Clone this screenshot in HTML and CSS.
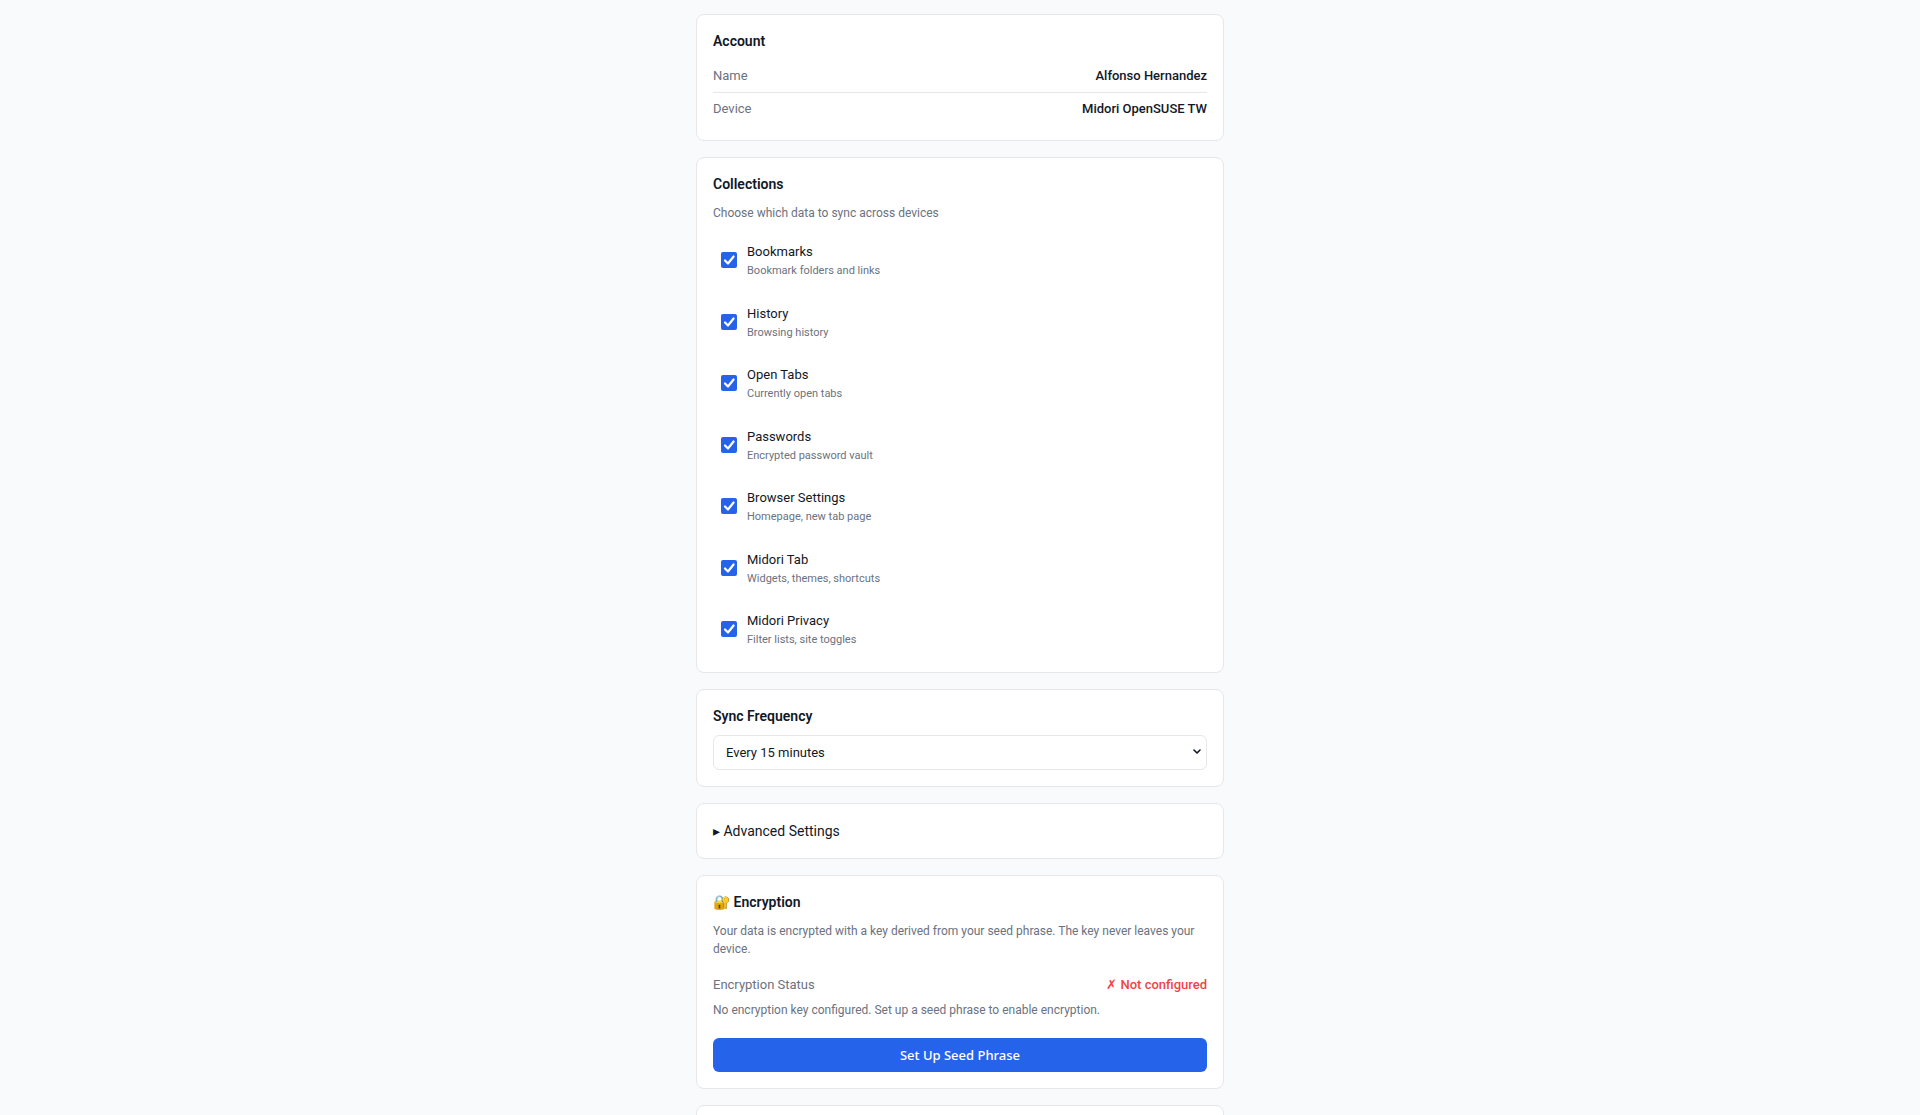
FILE: index.html
```html
<!DOCTYPE html>
<html lang="en">
<head>
    <meta charset="UTF-8">
    <meta name="viewport" content="width=device-width, initial-scale=1.0">
    <title>Midori Sync Settings</title>
    <link rel="stylesheet" href="styles.css">
</head>
<body>
    <main class="container">
        <section class="card">
            <h2>Account</h2>
            <div class="row">
                <span class="label">Name</span>
                <span class="value">Alfonso Hernandez</span>
            </div>
            <div class="row">
                <span class="label">Device</span>
                <span class="value">Midori OpenSUSE TW</span>
            </div>
        </section>

        <section class="card">
            <h2>Collections</h2>
            <p class="desc">Choose which data to sync across devices</p>
            <div class="collections">
                <label class="collection">
                    <input type="checkbox" checked>
                    <div>
                        <span class="collection-name">Bookmarks</span>
                        <div class="collection-desc">Bookmark folders and links</div>
                    </div>
                </label>
                <label class="collection">
                    <input type="checkbox" checked>
                    <div>
                        <span class="collection-name">History</span>
                        <div class="collection-desc">Browsing history</div>
                    </div>
                </label>
                <label class="collection">
                    <input type="checkbox" checked>
                    <div>
                        <span class="collection-name">Open Tabs</span>
                        <div class="collection-desc">Currently open tabs</div>
                    </div>
                </label>
                <label class="collection">
                    <input type="checkbox" checked>
                    <div>
                        <span class="collection-name">Passwords</span>
                        <div class="collection-desc">Encrypted password vault</div>
                    </div>
                </label>
                <label class="collection">
                    <input type="checkbox" checked>
                    <div>
                        <span class="collection-name">Browser Settings</span>
                        <div class="collection-desc">Homepage, new tab page</div>
                    </div>
                </label>
                <label class="collection">
                    <input type="checkbox" checked>
                    <div>
                        <span class="collection-name">Midori Tab</span>
                        <div class="collection-desc">Widgets, themes, shortcuts</div>
                    </div>
                </label>
                <label class="collection">
                    <input type="checkbox" checked>
                    <div>
                        <span class="collection-name">Midori Privacy</span>
                        <div class="collection-desc">Filter lists, site toggles</div>
                    </div>
                </label>
            </div>
        </section>

        <section class="card">
            <h2><label for="frequency">Sync Frequency</label></h2>
            <select id="frequency">
                <option>Every 5 minutes</option>
                <option selected>Every 15 minutes</option>
                <option>Every 30 minutes</option>
                <option>Every hour</option>
            </select>
        </section>

        <section class="card">
            <details>
                <summary>Advanced Settings</summary>
            </details>
        </section>

        <section class="card">
            <h2>🔐 Encryption</h2>
            <p class="desc">Your data is encrypted with a key derived from your seed phrase. The key never leaves your device.</p>
            <div class="row">
                <span class="label">Encryption Status</span>
                <span class="value error">✗ Not configured</span>
            </div>
            <p class="desc">No encryption key configured. Set up a seed phrase to enable encryption.</p>
            <div class="actions">
                <button type="button" class="btn-primary">Set Up Seed Phrase</button>
            </div>
        </section>

        <section class="card"></section>
    </main>
</body>
</html>
```
FILE: styles.css
```css
* { box-sizing: border-box; margin: 0; padding: 0; }
body { font-family: Roboto, sans-serif; font-size: 14px; line-height: 1.5; color: #111827; background: #f9fafb; height: 100vh; overflow: hidden; }
.container { max-width: 560px; margin: 0 auto; padding: 14px 16px; }

.card { background: white; border: 1px solid #e5e7eb; border-radius: 8px; padding: 16px; margin-bottom: 16px; }
.card h2 { font-size: 14px; font-weight: 600; margin-bottom: 8px; }
.desc { font-size: 12px; color: #6b7280; padding-top: 1px; margin-bottom: 11px; }

.row { display: flex; justify-content: space-between; align-items: center; padding: 6px 0; font-size: 13px; }
.row + .row { border-top: 1px solid #e5e7eb; }
.label { color: #6b7280; }
.value { font-weight: 500; }
.value.error { color: #ef4444; }

.collections { display: flex; flex-direction: column; gap: 8px; }
.collection { display: flex; align-items: center; gap: 10px; padding: 8px 8px 7px; cursor: pointer; }
.collection input { appearance: none; width: 16px; height: 16px; border: 1px solid #9ca3af; border-radius: 2px; }
.collection input:checked {
    border: none;
    background: #2563eb url("data:image/svg+xml,%3Csvg xmlns='http://www.w3.org/2000/svg' viewBox='0 0 16 16'%3E%3Cpath d='M4 8.5l3 3 5.6-7' fill='none' stroke='white' stroke-width='2.2' stroke-linecap='round' stroke-linejoin='round'/%3E%3C/svg%3E");
}
.collection-name { font-size: 13px; }
.collection-desc { font-size: 11px; color: #6b7280; padding-top: 1px; }

select {
    appearance: none;
    display: block;
    width: 100%;
    padding: 8px 12px;
    font-family: inherit;
    font-size: 13px;
    line-height: 17px;
    color: #111827;
    background: white url("data:image/svg+xml,%3Csvg xmlns='http://www.w3.org/2000/svg' width='8' height='6' viewBox='0 0 8 6'%3E%3Cpath d='M1 1l3 3 3-3' fill='none' stroke='%23111827' stroke-width='1.6' stroke-linecap='round' stroke-linejoin='round'/%3E%3C/svg%3E") no-repeat right 5px center;
    border: 1px solid #e5e7eb;
    border-radius: 6px;
}
summary { list-style: inside "▸ "; line-height: 22px; cursor: pointer; }

.actions { padding-top: 8px; }
button { display: block; width: 100%; padding: 8px 16px; border: none; border-radius: 6px; font-family: "Noto Sans", sans-serif; font-size: 13px; font-weight: 500; cursor: pointer; }
.btn-primary { background: #2563eb; color: white; }
```
